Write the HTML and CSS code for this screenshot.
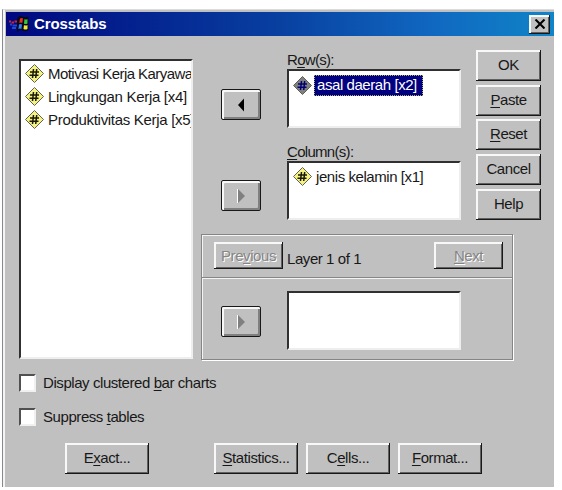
FILE: index.html
```html
<!DOCTYPE html>
<html lang="id">
<head>
<meta charset="utf-8">
<title>Crosstabs</title>
<link rel="stylesheet" href="styles.css">
</head>
<body>
<svg class="defs" width="0" height="0">
  <symbol id="num" viewBox="0 0 19 19">
    <path d="M9.5 .5 18.500 9.5 9.5 18.500 .5 9.5Z" fill="currentColor" stroke="#606058" stroke-width="1"/>
    <path d="M8.500 5 7.500 14M11.700 5 10.700 14M5 8h9M4.500 11.200h9" fill="none" stroke="var(--ink)" stroke-width="1.500"/>
  </symbol>
</svg>
<main class="dialog">
  <header class="titlebar">
    <svg class="logo" viewBox="0 0 22 18" width="22" height="18">
      <path d="M9 4Q11 0 14 1.500Q17 3 20.500 1.500V15Q18 17 15 15.500Q12 14 9 16.500Z" fill="#080818"/>
      <path d="M12 3.500q2-1 3 0l-.7 4.500q-1.500-1-3 0Z" fill="#e83020"/>
      <path d="M16.500 4q1.500 1 3 0v4.500q-2 1-3.500 0Z" fill="#30c840"/>
      <path d="M11 9.500q1.500-1 3 0l-.6 4.500q-1.500-1-3 0Z" fill="#3080f0"/>
      <path d="M16 10q1.500 1 3.500 0v4q-2 1-4 0Z" fill="#f0e838"/>
      <path d="M1 6.500h2M3.500 7.500h2.500M6.500 6.500h2.500" stroke="#d02038" stroke-width="2"/>
      <path d="M2 9.500h2M4.500 10.500h4.500M4 13h4" stroke="#2048d0" stroke-width="2"/>
    </svg>
    <h1>Crosstabs</h1>
    <button class="close" aria-label="Close"><svg viewBox="0 0 12 10" width="12" height="10"><path d="M1.500 .5 10.500 9.500M10.500 .5 1.500 9.500" stroke="#000" stroke-width="2.100"/></svg></button>
  </header>
  <div class="content">
    <div class="list source">
      <div class="item"><svg class="icon"><use href="#num"/></svg><span class="tight">Motivasi Kerja Karyawan</span></div>
      <div class="item"><svg class="icon"><use href="#num"/></svg><span class="wide">Lingkungan Kerja [x4]</span></div>
      <div class="item"><svg class="icon"><use href="#num"/></svg><span class="wide">Produktivitas Kerja [x5]</span></div>
    </div>
    <div class="main">
      <div class="upper">
        <div class="fields">
          <div class="field rows">
            <button class="move"><svg viewBox="0 0 8 14" width="8" height="14"><path d="M7 .5V13.500L1 7Z" fill="#000"/></svg></button>
            <div class="entry"><label>R<u>o</u>w(s):</label>
              <div class="list"><div class="item selected"><svg class="icon"><use href="#num"/></svg><span>asal daerah [x2]</span></div></div></div>
          </div>
          <div class="field columns">
            <button class="move"><svg viewBox="0 0 8 14" width="8" height="14"><path d="M1 0V14L8 7Z" fill="#808080"/><path d="M.5 0V14" stroke="#fff"/></svg></button>
            <div class="entry"><label><u>C</u>olumn(s):</label>
              <div class="list"><div class="item"><svg class="icon"><use href="#num"/></svg><span>jenis kelamin [x1]</span></div></div></div>
          </div>
        </div>
        <nav class="actions">
          <button>OK</button><button><span><u>P</u>aste</span></button><button><span><u>R</u>eset</span></button><button>Cancel</button><button>Help</button>
        </nav>
      </div>
      <section class="layers">
        <div class="pager">
          <button disabled><span>Pre<u>v</u>ious</span></button><span class="count">Layer 1 of 1</span><button disabled><span><u>N</u>ext</span></button>
        </div>
        <div class="layer">
          <button class="move"><svg viewBox="0 0 8 14" width="8" height="14"><path d="M1 0V14L8 7Z" fill="#808080"/><path d="M.5 0V14" stroke="#fff"/></svg></button>
          <div class="list"></div>
        </div>
      </section>
    </div>
  </div>
  <div class="options">
    <label class="check"><span class="box"></span><span>Display clustered <u>b</u>ar charts</span></label>
    <label class="check"><span class="box"></span><span>Suppress <u>t</u>ables</span></label>
  </div>
  <footer>
    <button><span>E<u>x</u>act...</span></button><button><span><u>S</u>tatistics...</span></button><button><span>C<u>e</u>lls...</span></button><button><span><u>F</u>ormat...</span></button>
  </footer>
</main>
</body>
</html>
```
FILE: styles.css
```css
* { box-sizing: border-box; }
body {
  margin: 0; width: 562px; height: 490px; overflow: hidden; background: #fff;
  padding: 9px 0 0 2px; color: #181818;
  font: 15px/18px "Liberation Sans", Arial, sans-serif; letter-spacing: -.43px;
}
.defs { display: block; }
u { text-decoration: underline; text-underline-offset: 2px; text-decoration-thickness: 1px; text-decoration-skip-ink: none; }
.dialog {
  width: 552px; height: 478px; background: #c0c0c0; padding: 3px 0 0 2px;
  border-left: 1px solid #868a90; border-top: 1px solid #dcdcdc;
  box-shadow: inset 2px 0 #f4f4f4;
}
.titlebar {
  height: 24px; margin: -1px 0 -1px 1px; display: flex; align-items: center;
  padding: 0 4px 0 2px; background: linear-gradient(90deg, #000880, #0840a0 50%, #1068c0 78%, #1084c8);
}
.titlebar h1 { margin: 0 auto 0 4px; color: #fff; font: bold 15px/20px "Liberation Sans", Arial, sans-serif; letter-spacing: -.1px; }
button {
  font: inherit; letter-spacing: inherit; color: #181818; background: #c0c0c0; padding: 0; border: 0; white-space: nowrap;
  display: flex; align-items: center; justify-content: center;
  box-shadow: inset -1px -1px #181818, inset 2px 2px #f8f8f8, inset -2px -2px #606060;
}
.close { width: 21px; height: 19px; }
.content { display: flex; height: 324px; padding: 24px 0 0 14px; }
.list {
  background: #fff; overflow: hidden; padding: 3px 2px 0 4px;
  border: 2px solid; border-color: #303030 #eee #eee #303030;
}
.source { width: 174px; height: 300px; flex: none; padding-top: 1px; }
.item { display: flex; align-items: center; height: 23px; white-space: nowrap; --ink: #181808; }
.icon { width: 19px; height: 19px; flex: none; color: #f6f280; margin-right: 4px; }
.wide { letter-spacing: -.3px; }
.tight { letter-spacing: -.55px; }
.main { margin: -9px 0 0 8px; width: 340px; }
.upper { display: flex; justify-content: space-between; padding-left: 20px; height: 184px; }
.field { display: flex; gap: 26px; }
.move {
  width: 40px; height: 31px; border-radius: 2px; border: 1px solid #181818; flex: none;
  box-shadow: inset 2px 2px #f8f8f8, inset -2px -2px #808080;
}
.fields .move { margin-top: 39px; }
.rows { height: 92px; }
.columns .move { margin-top: 38px; }
.columns .list { padding-top: 2px; }
.entry { width: 174px; }
.entry label { display: block; height: 19px; padding-top: 1px; letter-spacing: -.7px; }
.entry .list, .layer .list { width: 174px; height: 59px; }
.selected { --ink: #000070; }
.selected .icon { color: #808080; margin-right: 2px; }
.selected span { background: #000080; color: #fff; outline: 1px dotted #b0b060; outline-offset: -1px; padding: 1px 6px 1px 3px; height: 21px; margin-top: -1px; }
.actions { width: 65px; display: grid; grid-auto-rows: 31px; row-gap: 3.7px; align-content: start; }
.actions button { height: 31px; padding-bottom: 1px; }
.layers { width: 313px; }
.pager, .layer { border: 1px solid #858585; box-shadow: 1px 1px #fff, inset 1px 1px #f4f4f4; width: 312px; }
.pager { height: 44px; display: flex; align-items: flex-start; padding: 7px 9px 0 12px; }
.pager button { width: 69px; height: 27px; color: #858585; text-shadow: 1px 1px #fff; }
.pager .count { margin: 8px auto 0 4px; }
.layer { height: 82px; border-top: 0; display: flex; gap: 26px; padding: 13px 0 0 19px; }
.layer .move { margin-top: 15px; }
.options { padding: 15px 0 0 14px; height: 84px; display: grid; grid-auto-rows: 18px; row-gap: 16px; align-content: start; }
.check { display: flex; align-items: center; gap: 7px; }
.box { width: 17px; height: 18px; background: #fff; border: 2px solid; border-color: #505050 #f0f0f0 #f0f0f0 #505050; }
footer { display: flex; gap: 8px; padding-left: 60px; }
footer button { width: 84px; height: 31px; padding-bottom: 2px; }
footer button:first-child { margin-right: 57px; }
```
